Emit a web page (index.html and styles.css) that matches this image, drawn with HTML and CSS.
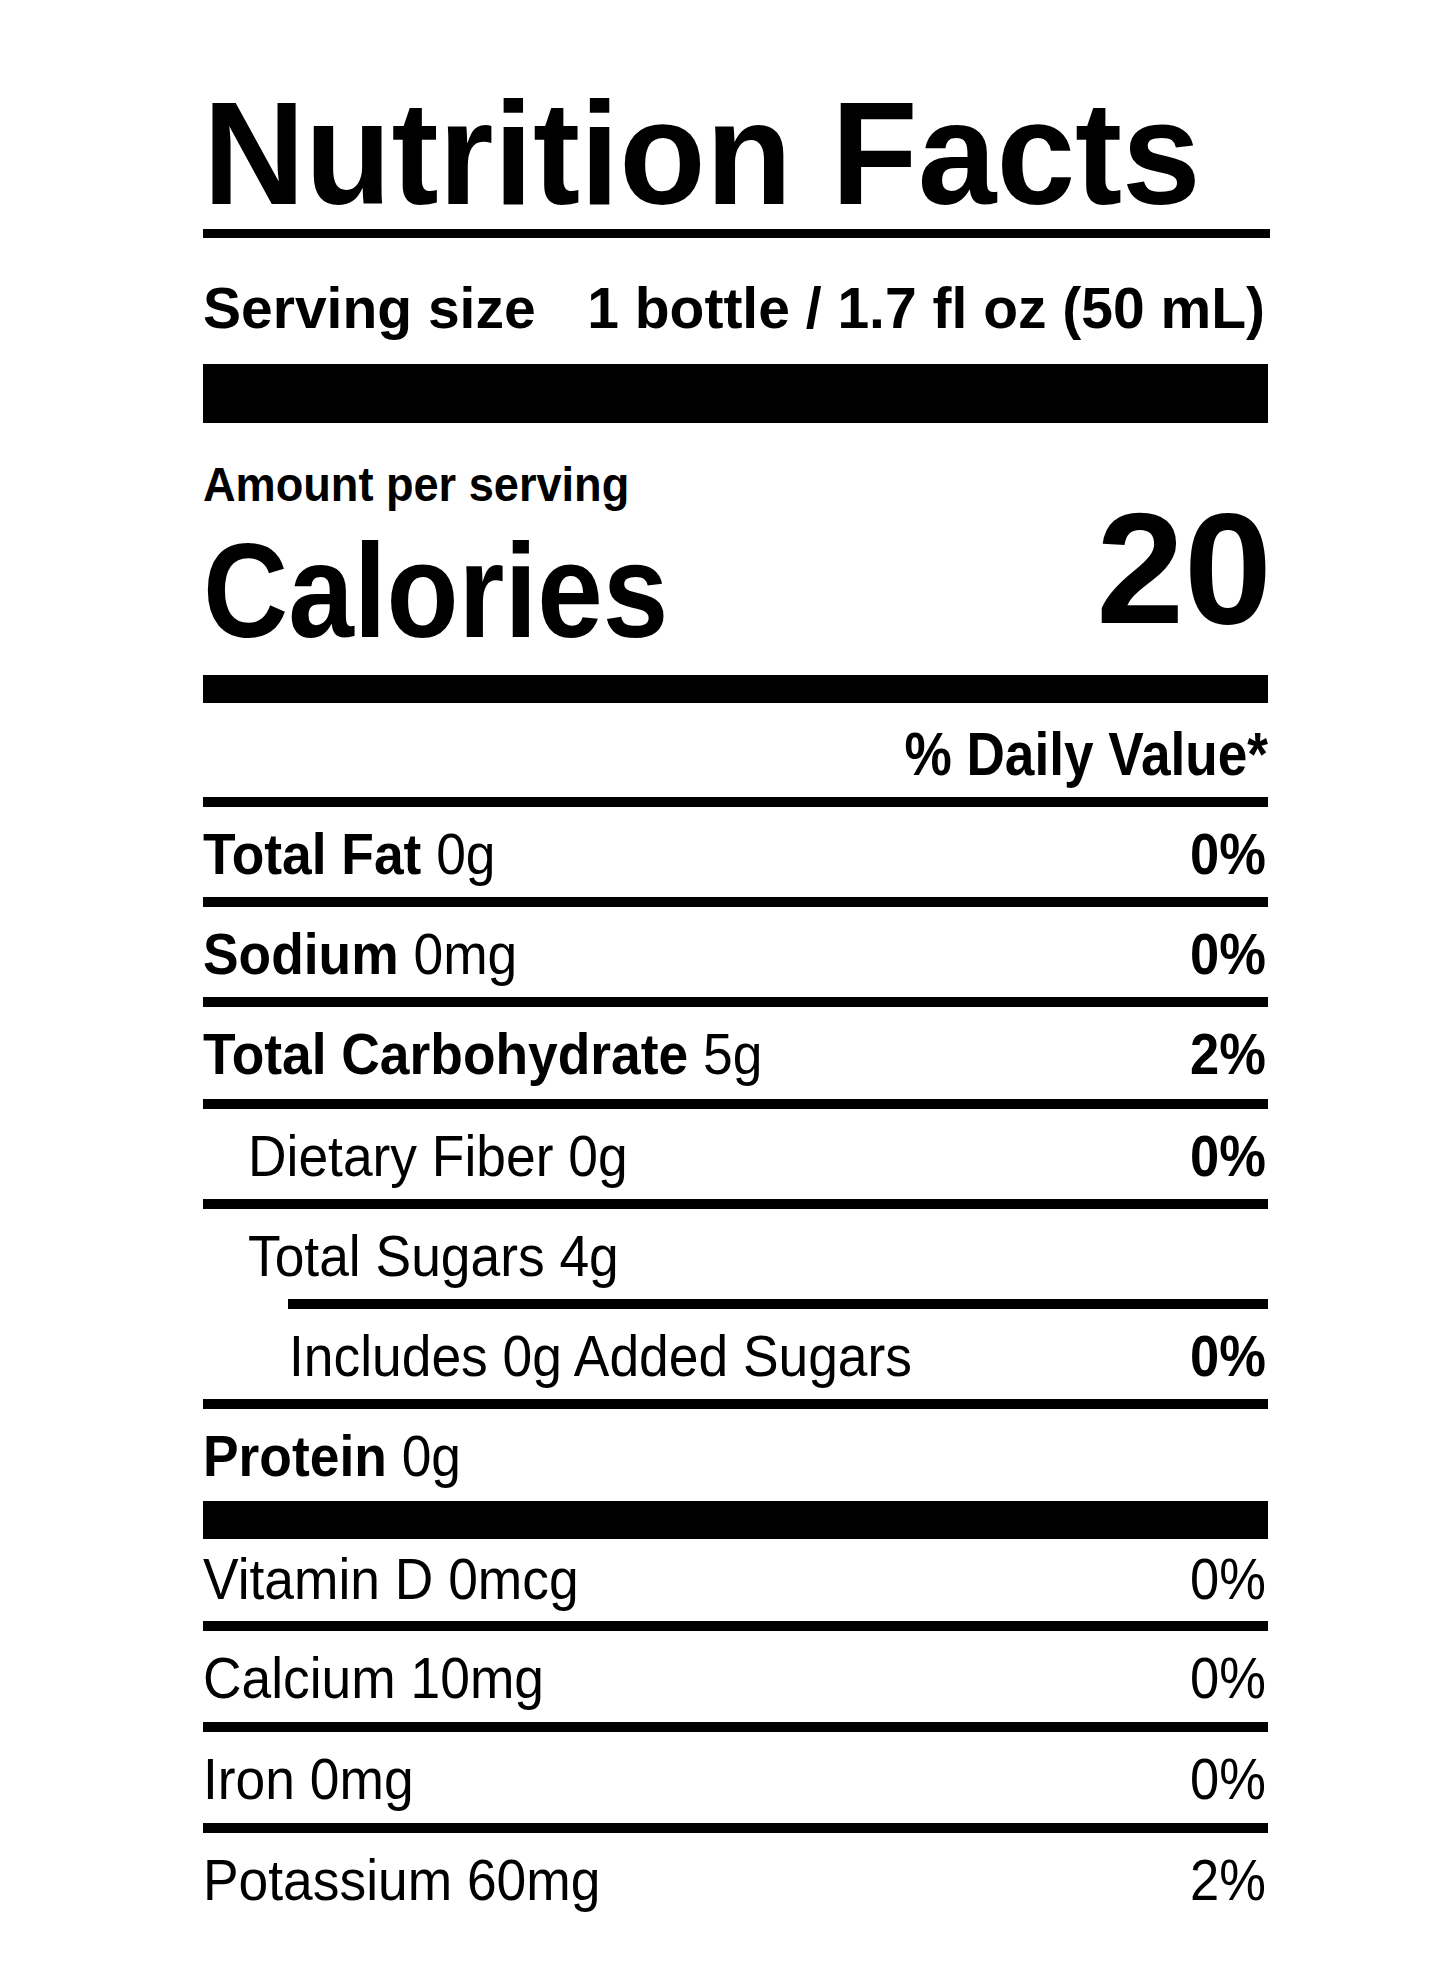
FILE: index.html
```html
<!DOCTYPE html>
<html lang="en">
<head>
<meta charset="utf-8">
<title>Nutrition Facts</title>
<link rel="stylesheet" href="styles.css">
</head>
<body>
<div class="label">
  <h1 class="title"><span>Nutrition Facts</span></h1>
  <div class="rule-top"></div>
  <div class="serving">
    <span>Serving size</span>
    <span>1 bottle / 1.7 fl oz (50 mL)</span>
  </div>
  <div class="bar-lg"></div>
  <div class="cal">
    <div class="cal-left">
      <div class="amount"><span>Amount per serving</span></div>
      <div class="calories"><span>Calories</span></div>
    </div>
    <div class="cal-num">20</div>
  </div>
  <div class="bar-md"></div>
  <div class="dv-head"><span>% Daily Value*</span></div>
  <div class="rule"></div>

  <div class="row"><span class="name"><b>Total Fat</b> 0g</span><span class="pct">0%</span></div>
  <div class="rule"></div>
  <div class="row"><span class="name"><b>Sodium</b> 0mg</span><span class="pct">0%</span></div>
  <div class="rule"></div>
  <div class="row tall"><span class="name"><b>Total Carbohydrate</b> 5g</span><span class="pct">2%</span></div>
  <div class="rule"></div>
  <div class="row sub"><span class="name">Dietary Fiber 0g</span><span class="pct">0%</span></div>
  <div class="rule"></div>
  <div class="row sub"><span class="name">Total Sugars 4g</span></div>
  <div class="rule indent"></div>
  <div class="row sub2"><span class="name">Includes 0g Added Sugars</span><span class="pct">0%</span></div>
  <div class="rule"></div>
  <div class="row tall"><span class="name"><b>Protein</b> 0g</span></div>
  <div class="bar-sm"></div>

  <div class="row vit vit-first"><span class="name">Vitamin D 0mcg</span><span class="pct">0%</span></div>
  <div class="rule"></div>
  <div class="row vit"><span class="name">Calcium 10mg</span><span class="pct">0%</span></div>
  <div class="rule"></div>
  <div class="row vit"><span class="name">Iron 0mg</span><span class="pct">0%</span></div>
  <div class="rule"></div>
  <div class="row vit"><span class="name">Potassium 60mg</span><span class="pct">2%</span></div>
</div>
</body>
</html>
```
FILE: styles.css
```css
html, body {
  margin: 0;
  padding: 0;
  background: #ffffff;
  color: #000000;
  font-family: "Liberation Sans", Arial, sans-serif;
}

.label {
  width: 1065px;
  margin-left: 203px;
  padding-top: 80px;
}

.title {
  margin: 0;
  height: 147px;
  font-size: 147px;
  line-height: 147px;
  font-weight: 700;
  white-space: nowrap;
}

.title span {
  display: inline-block;
  transform: scaleX(0.962);
  transform-origin: left center;
}

.rule-top {
  height: 9px;
  margin-top: 2px;
  margin-right: -2px;
  background: #000;
}

.serving {
  display: flex;
  justify-content: space-between;
  padding: 42px 3px 27px 0;
  font-size: 57px;
  line-height: 57px;
  font-weight: 700;
  white-space: nowrap;
}

.bar-lg {
  height: 59px;
  background: #000;
}

.cal {
  display: flex;
  justify-content: space-between;
  height: 252px;
}

.cal-left {
  padding-top: 38px;
}

.amount {
  font-size: 48px;
  line-height: 48px;
  font-weight: 700;
  white-space: nowrap;
}

.amount span {
  display: inline-block;
  transform: scaleX(0.94);
  transform-origin: left center;
}

.calories {
  margin-top: 15px;
  font-size: 134px;
  line-height: 134px;
  font-weight: 700;
  white-space: nowrap;
}

.calories span {
  display: inline-block;
  transform: scaleX(0.88);
  transform-origin: left center;
}

.cal-num {
  padding-top: 66px;
  margin-right: -4px;
  font-size: 158px;
  line-height: 158px;
  font-weight: 700;
}

.bar-md {
  height: 28px;
  background: #000;
}

.dv-head {
  box-sizing: border-box;
  height: 94px;
  padding-top: 21px;
  text-align: right;
  font-size: 61px;
  line-height: 61px;
  font-weight: 700;
  white-space: nowrap;
}

.dv-head span {
  display: inline-block;
  transform: scaleX(0.872);
  transform-origin: right center;
}

.rule {
  height: 10px;
  background: #000;
}

.rule.indent {
  margin-left: 85px;
}

.bar-sm {
  height: 38px;
  background: #000;
}

.row {
  box-sizing: border-box;
  display: flex;
  justify-content: space-between;
  height: 90px;
  padding-top: 18px;
  font-size: 58px;
  line-height: 58px;
  white-space: nowrap;
}

.row.tall {
  height: 92px;
}

.row.sub {
  padding-left: 45px;
}

.row.sub2 {
  padding-left: 86px;
}

.row .name {
  display: inline-block;
  transform: scaleX(0.92);
  transform-origin: left center;
}

.row .pct {
  display: inline-block;
  font-weight: 700;
  transform: scaleX(0.905);
  transform-origin: right center;
  margin-right: 2px;
}

.row b {
  font-weight: 700;
}

.row.vit {
  height: 91px;
}

.row.vit-first {
  height: 82px;
  padding-top: 11px;
}

.row.vit .pct {
  font-weight: 400;
}
```
